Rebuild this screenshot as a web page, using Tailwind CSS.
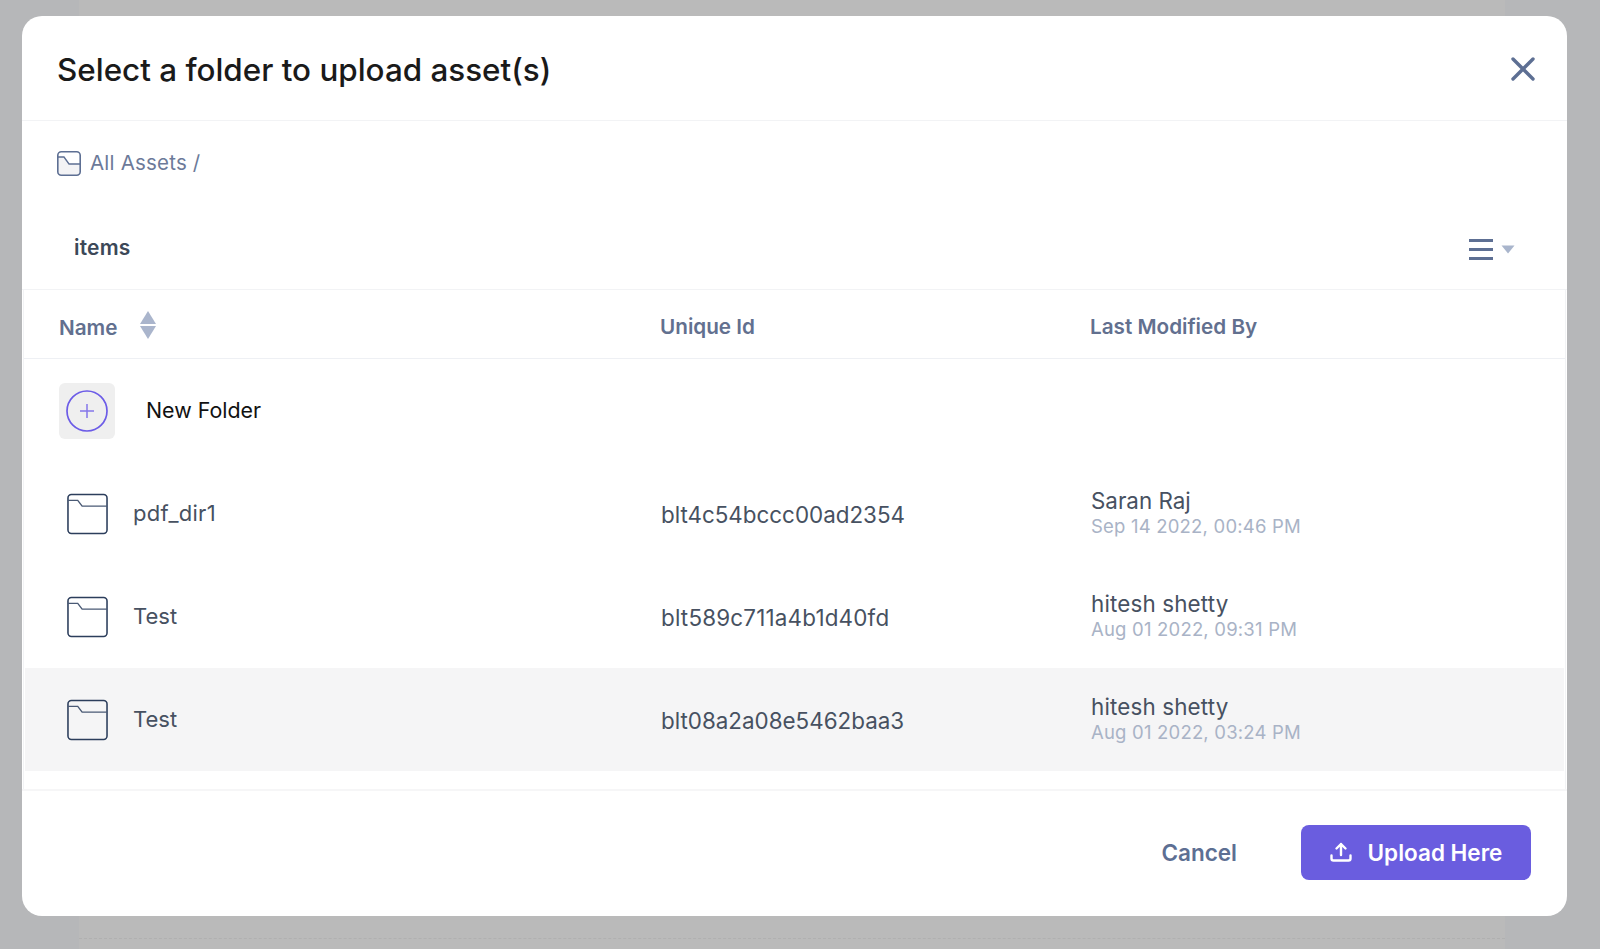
<!doctype html>
<html lang="en">
  <head>
    <meta charset="UTF-8" />
    <meta name="viewport" content="width=device-width, initial-scale=1.0" />
    <title>Select a folder</title>
    <script src="https://cdn.jsdelivr.net/npm/@tailwindcss/browser@4"></script>
  </head>
  <body class="bg-[#b6b7b9] h-[949px] overflow-hidden relative font-['Inter',sans-serif]">
    <!-- page behind the backdrop -->
    <div class="ml-[79px] mr-[95px] h-full bg-[#bababa] flex flex-col justify-end">
      <div class="border-t border-dashed border-[#b0b0b0] h-[11px]"></div>
    </div>

    <div class="absolute left-[22px] top-[16px] w-[1545px] h-[900px] bg-white rounded-[20px] flex flex-col">
      <div class="h-[105px] shrink-0 border-b border-[#f2f3f5] pl-[35px] pr-[31px] flex items-center justify-between">
        <h1 class="text-[31.4px] leading-none font-medium text-[#1a1a1a] mt-[5px]">Select a folder to upload asset(s)</h1>
        <svg class="w-[26px] h-[26px] mt-[1px]" viewBox="0 0 26 26" fill="none" stroke="#5d6f93" stroke-width="3.4" stroke-linecap="round">
          <path d="M3 3l20 20M23 3L3 23" />
        </svg>
      </div>

      <div class="h-[87px] shrink-0 pl-[35px] flex items-center gap-[9px] text-[#6c7a99] text-[20.5px] tracking-[0.2px] pb-[2px]">
        <svg class="w-[24px] h-[25px]" viewBox="0 0 24 25" fill="none" stroke="#5d6f93" stroke-width="1.6">
          <path d="M1 6h6l5 7h11V21a3 3 0 0 1-3 3H4a3 3 0 0 1-3-3z" fill="#f3f3f5" stroke="none" />
          <rect x="0.8" y="0.8" width="22.4" height="23.4" rx="3.500" />
          <path d="M1 6h6l5 7h11" stroke-width="1.3" />
        </svg>
        <span>All Assets /</span>
      </div>

      <div class="h-[82px] shrink-0 pl-[52px] pr-[52px] flex items-center justify-between border-b border-[#f2f3f5] pb-[2px]">
        <span class="text-[21px] font-semibold text-[#3c4858] tracking-[0.2px]">items</span>
        <div class="flex items-center gap-[8px] mt-[3px]">
          <div class="w-[24px] flex flex-col gap-[6px]">
            <div class="h-[3px] bg-[#5d6f93]"></div>
            <div class="h-[3px] bg-[#5d6f93]"></div>
            <div class="h-[3px] bg-[#5d6f93]"></div>
          </div>
          <svg class="w-[14px] h-[9px]" viewBox="0 0 14 9"><path d="M0.5 0.5h13L7 8.500z" fill="#a9b5cc" /></svg>
        </div>
      </div>

      <!-- table -->
      <div class="flex-1 border-l border-r border-[#f2f3f5] ml-[1px] mr-[1px]">
        <div class="h-[69px] grid grid-cols-[601px_430px_1fr] border-b border-[#eef0f4] items-center pl-[35px] pt-[6px] font-semibold text-[20.7px] text-[#62708f]">
          <div class="flex items-center gap-[22px]">
            <span class="mt-[2px]">Name</span>
            <svg class="w-[18px] h-[29px] -mt-[2px]" viewBox="0 0 18 29" fill="#aab5cc"><path d="M9 0l8 13H1z" /><path d="M9 28l8-13H1z" /></svg>
          </div>
          <div>Unique Id</div>
          <div>Last Modified By</div>
        </div>

        <div class="h-[103px] flex items-center pl-[35px]">
          <div class="w-[56px] h-[56px] rounded-[6px] bg-[#efefef] flex items-center justify-center">
            <svg class="w-[42px] h-[42px]" viewBox="0 0 42 42" fill="none" stroke="#6c5ce7">
              <circle cx="21" cy="21" r="20" stroke-width="1.7" />
              <path d="M21 14v14M14 21h14" stroke="#8577ea" stroke-width="1.5" />
            </svg>
          </div>
          <span class="ml-[31px] text-[21.4px] text-[#111]">New Folder</span>
        </div>

        <div class="h-[103px] grid grid-cols-[601px_430px_1fr] items-center pl-[42px] text-[#475161] text-[22px]">
          <div class="flex items-center gap-[25px]">
            <svg class="w-[41px] h-[42px] ml-[1px] shrink-0" viewBox="0 0 42 42" fill="none" stroke="#2c3e5c" stroke-width="1.6">
              <rect x="1" y="1" width="40" height="40" rx="3.500" />
              <path d="M1 7h10l4.500 6H41" stroke="#4a5a75" stroke-width="1.4" />
            </svg>
            <span class="-mt-[1px] tracking-[0.25px]">pdf_dir1</span>
          </div>
          <div class="-ml-[6px] pt-[2px] text-[22.4px]">blt4c54bccc00ad2354</div>
          <div class="-ml-[6px] leading-[25px] pt-[1px]">
            <div class="text-[22.4px] -mt-[1px]">Saran Raj</div>
            <div class="text-[18.5px] text-[#a9b3c6] tracking-[0.2px] mt-[1px]">Sep 14 2022, 00:46 PM</div>
          </div>
        </div>

        <div class="h-[103px] grid grid-cols-[601px_430px_1fr] items-center pl-[42px] text-[#475161] text-[22px]">
          <div class="flex items-center gap-[25px]">
            <svg class="w-[41px] h-[42px] ml-[1px] shrink-0" viewBox="0 0 42 42" fill="none" stroke="#2c3e5c" stroke-width="1.6">
              <rect x="1" y="1" width="40" height="40" rx="3.500" />
              <path d="M1 7h10l4.500 6H41" stroke="#4a5a75" stroke-width="1.4" />
            </svg>
            <span>Test</span>
          </div>
          <div class="-ml-[6px] pt-[2px] text-[22.4px] tracking-[0.2px]">blt589c711a4b1d40fd</div>
          <div class="-ml-[6px] leading-[25px] pt-[1px]">
            <div class="text-[22.4px] -mt-[1px] tracking-[0.15px]">hitesh shetty</div>
            <div class="text-[18.5px] text-[#a9b3c6] tracking-[0.2px] mt-[1px]">Aug 01 2022, 09:31 PM</div>
          </div>
        </div>

        <div class="h-[103px] mx-[1px] bg-[#f5f5f6] grid grid-cols-[601px_430px_1fr] items-center pl-[41px] text-[#475161] text-[22px]">
          <div class="flex items-center gap-[25px]">
            <svg class="w-[41px] h-[42px] ml-[1px] shrink-0" viewBox="0 0 42 42" fill="none" stroke="#2c3e5c" stroke-width="1.6">
              <rect x="1" y="1" width="40" height="40" rx="3.500" />
              <path d="M1 7h10l4.500 6H41" stroke="#4a5a75" stroke-width="1.4" />
            </svg>
            <span>Test</span>
          </div>
          <div class="-ml-[6px] pt-[2px] text-[22.4px]">blt08a2a08e5462baa3</div>
          <div class="-ml-[6px] leading-[25px] pt-[1px]">
            <div class="text-[22.4px] -mt-[1px] tracking-[0.15px]">hitesh shetty</div>
            <div class="text-[18.5px] text-[#a9b3c6] tracking-[0.2px] mt-[1px]">Aug 01 2022, 03:24 PM</div>
          </div>
        </div>
      </div>

      <div class="h-[127px] shrink-0 border-t-2 border-[#f6f6f7] flex items-center justify-end pr-[36px] pb-[3px] gap-[64px]">
        <span class="text-[22.5px] font-semibold text-[#5d6f93] pt-[1px]">Cancel</span>
        <button class="w-[230px] h-[55px] rounded-[8px] bg-[#6a5ddf] text-white text-[22.5px] font-semibold flex items-center justify-center gap-[16px]">
          <svg class="w-[22px] h-[20px]" viewBox="0 0 22 20" fill="none" stroke="white" stroke-width="2.4" stroke-linecap="round" stroke-linejoin="round">
            <path d="M11 13V2M6.500 6.500L11 2l4.500 4.500M1.500 13.500v3a2 2 0 0 0 2 2h15a2 2 0 0 0 2-2v-3" />
          </svg>
          <span class="pt-[1px]">Upload Here</span>
        </button>
      </div>
    </div>
  </body>
</html>
